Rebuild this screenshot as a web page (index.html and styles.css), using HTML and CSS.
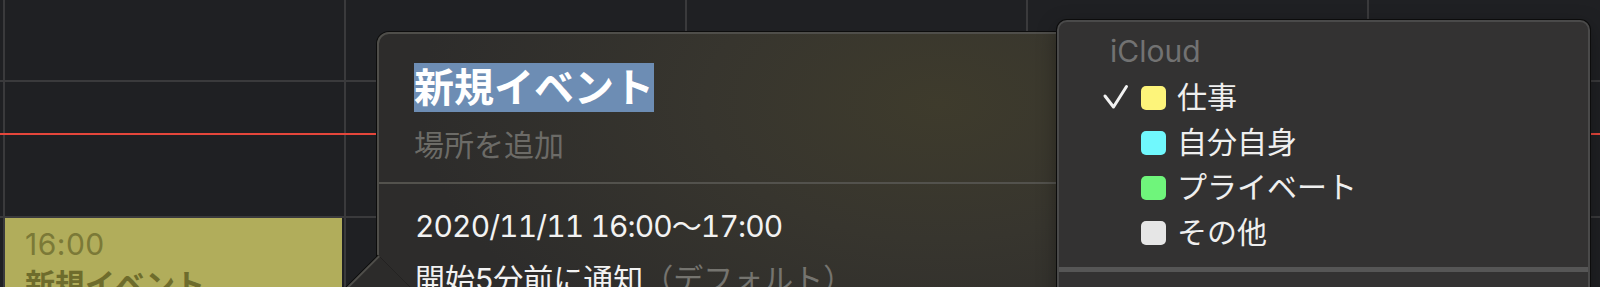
FILE: index.html
```html
<!DOCTYPE html>
<html lang="ja">
<head>
<meta charset="utf-8">
<title>Calendar</title>
<link rel="stylesheet" href="styles.css">
</head>
<body>
<div class="screen">
  <div class="week">
    <div class="day">
      <div class="event">
        <div class="ev-time">16:00</div>
        <div class="ev-title">新規イベント</div>
      </div>
    </div>
    <div class="day"></div>
    <div class="day"></div>
    <div class="day"></div>
    <div class="day"></div>
  </div>
  <div class="now-line"></div>

  <div class="popover">
    <div class="pop-arrow"></div>
    <div class="pop-head">
      <div class="pop-title"><span class="sel">新規イベント</span></div>
      <div class="pop-location">場所を追加</div>
    </div>
    <div class="pop-sep"></div>
    <div class="pop-body">
      <div class="pop-date">2020/11/11 16:00〜17:00</div>
      <div class="pop-alert">開始5分前に通知<span class="muted">（デフォルト）</span></div>
    </div>
  </div>

  <div class="menu">
    <div class="menu-head">iCloud</div>
    <div class="item">
      <svg class="check" viewBox="0 0 24 24"><path d="M2 10 L10.5 21 L23.5 0.5" fill="none" stroke="#f2f2f2" stroke-width="3" stroke-linecap="round" stroke-linejoin="round"/></svg>
      <span class="swatch sw-yellow"></span><span class="label">仕事</span>
    </div>
    <div class="item">
      <span class="check"></span>
      <span class="swatch sw-cyan"></span><span class="label">自分自身</span>
    </div>
    <div class="item">
      <span class="check"></span>
      <span class="swatch sw-green"></span><span class="label">プライベート</span>
    </div>
    <div class="item">
      <span class="check"></span>
      <span class="swatch sw-white"></span><span class="label">その他</span>
    </div>
    <div class="menu-sep"></div>
  </div>
</div>
</body>
</html>
```
FILE: styles.css
```css
html, body {
  margin: 0;
  padding: 0;
  background: #1f2023;
}

.screen {
  position: relative;
  width: 1600px;
  height: 287px;
  overflow: hidden;
  background-color: #1f2023;
  background-image:
    linear-gradient(#3a3a3c, #3a3a3c),
    linear-gradient(#3a3a3c, #3a3a3c);
  background-size: 100% 2px, 100% 2px;
  background-position: 0 80px, 0 216px;
  background-repeat: no-repeat;
  font-family: Inter, "Noto Sans CJK JP", sans-serif;
}

.week {
  display: flex;
  height: 100%;
  padding-left: 3px;
}

.day {
  flex: 0 0 341px;
  box-sizing: border-box;
  border-left: 2px solid #3a3a3c;
}

.event {
  margin: 218px 2px 0 0;
  height: 90px;
  background: #b1ad5b;
  padding: 6px 0 0 20px;
  font-size: 30px;
  line-height: 40px;
  color: #7b7937;
}

.ev-time {
  letter-spacing: 0.5px;
}

.ev-title {
  font-weight: 700;
  color: #6e6c2c;
}

.now-line {
  position: absolute;
  left: 0;
  right: 0;
  top: 133px;
  height: 2px;
  background: #e5463b;
}

/* Event popover */
.popover {
  position: absolute;
  left: 377px;
  top: 32px;
  width: 720px;
  height: 320px;
  border: 2px solid #4f4e4a;
  border-radius: 12px;
  box-shadow: 0 0 0 1px #0d0d0d;
  background:
    radial-gradient(ellipse 520px 300px at 560px 70px, #3e3b2c 0%, #37352e 45%, #2d2c2b 100%);
}

.pop-arrow {
  position: absolute;
  left: -43px;
  top: 239px;
  width: 85px;
  height: 85px;
  box-sizing: border-box;
  background: #2c2b2a;
  border-left: 2px solid #4f4e4a;
  box-shadow: -1px 0 0 0 #0d0d0d;
  transform: rotate(45deg);
}

.pop-head {
  position: relative;
  padding: 29px 0 14px 35px;
}

.pop-title {
  font-size: 40px;
  line-height: 50px;
  font-weight: 700;
  color: #ffffff;
}

.sel {
  background: #6d8db4;
}

.pop-location {
  margin-top: 10px;
  font-size: 30px;
  line-height: 45px;
  color: #6c6b67;
}

.pop-sep {
  position: relative;
  height: 2px;
  background: #53524d;
}

.pop-body {
  position: relative;
  padding: 20px 0 0 36px;
  font-size: 30px;
  line-height: 45px;
  color: #f2f2f2;
}

.pop-date {
  font-feature-settings: "tnum";
  letter-spacing: -0.9px;
}

.pop-alert {
  margin-top: 8px;
}

.muted {
  color: #75746f;
}

/* Calendar menu */
.menu {
  position: absolute;
  left: 1057px;
  top: 20px;
  width: 533px;
  height: 320px;
  box-sizing: border-box;
  border: 2px solid #4a4a4a;
  border-radius: 10px;
  background: #333232;
  box-shadow: 0 0 0 1px #0c0c0c, 0 6px 20px rgba(0, 0, 0, 0.35);
  padding-top: 7px;
  font-size: 30px;
}

.menu-head {
  line-height: 45px;
  padding-left: 51px;
  margin-bottom: 1px;
  color: #727272;
}

.item {
  display: flex;
  align-items: center;
  height: 45px;
  padding-left: 44px;
  line-height: 45px;
  color: #efefef;
}

.check {
  display: block;
  width: 24px;
  height: 24px;
  flex: none;
  overflow: visible;
}

.swatch {
  width: 25px;
  height: 24px;
  border-radius: 5px;
  margin: 0 11px 0 14px;
  flex: none;
}

.sw-yellow { background: #fdf47a; }
.sw-cyan { background: #70f8fd; }
.sw-green { background: #6ff57b; }
.sw-white { background: #e6e6e6; }

.menu-sep {
  height: 5px;
  margin-top: 12px;
  background: #565656;
}
```
